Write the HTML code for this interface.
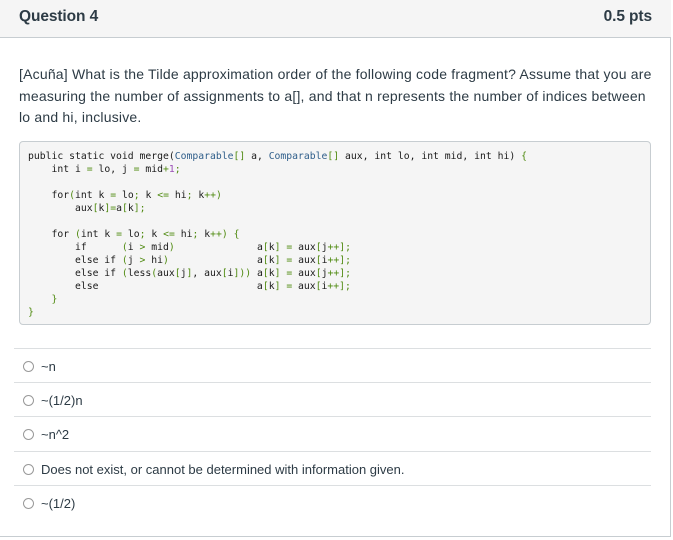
<!DOCTYPE html>
<html><head><meta charset="utf-8"><style>
body{margin:0;width:673px;height:540px;background:#fff;font-family:"Liberation Sans",sans-serif;color:#2d3b45;overflow:hidden;position:relative}
.card{position:absolute;left:-2px;top:-2px;width:671px;height:538px;border:1px solid #c7cdd1;border-top:none}
.hdr{position:absolute;left:0;top:0;width:671px;height:37px;background:#f5f5f5;border-bottom:1px solid #c7cdd1}
.hdr b{position:absolute;top:8px;font-size:15.5px;color:#2d3b45;letter-spacing:-0.1px}
.q{position:absolute;left:19px;top:64px;font-size:14px;line-height:21.5px;white-space:nowrap;letter-spacing:0.2px}
pre{position:absolute;left:19px;top:141px;width:632px;height:184px;box-sizing:border-box;margin:0;padding:8px 0 0 8px;background:#f5f5f5;border:1px solid #c7cdd1;border-radius:4px;font-family:"DejaVu Sans Mono",monospace;font-size:9.75px;line-height:13px;color:#1a1a1a}
.c{color:#2f5e8a}.g{color:#4f8a10}.n{color:#9a4fb5}
.ans{position:absolute;left:14px;width:637px;border-top:1px solid #dcdfe1;height:34px}
.ans span{position:absolute;left:27px;top:10px;font-size:13px;white-space:nowrap}
.ans i{position:absolute;left:9px;top:12px;width:9px;height:9px;border:1px solid #999;border-radius:50%}
</style></head><body>
<div class="card"></div>
<div class="hdr"><b style="left:19px">Question 4</b><b style="right:19px">0.5 pts</b></div>
<div class="q">[Acuña] What is the Tilde approximation order of the following code fragment? Assume that you are<br>measuring the number of assignments to a[], and that n represents the number of indices between<br>lo and hi, inclusive.</div>
<pre>public static void merge(<span class="c">Comparable</span><span class="g">[]</span> a, <span class="c">Comparable</span><span class="g">[]</span> aux, int lo, int mid, int hi) <span class="g">{</span>
    int i <span class="g">=</span> lo, j <span class="g">=</span> mid<span class="g">+</span><span class="n">1</span><span class="g">;</span>

    for<span class="g">(</span>int k <span class="g">=</span> lo<span class="g">;</span> k <span class="g">&lt;=</span> hi<span class="g">;</span> k<span class="g">++)</span>
        aux<span class="g">[</span>k<span class="g">]=</span>a<span class="g">[</span>k<span class="g">];</span>

    for <span class="g">(</span>int k <span class="g">=</span> lo<span class="g">;</span> k <span class="g">&lt;=</span> hi<span class="g">;</span> k<span class="g">++)</span> <span class="g">{</span>
        if      <span class="g">(</span>i <span class="g">&gt;</span> mid<span class="g">)</span>              a<span class="g">[</span>k<span class="g">]</span> <span class="g">=</span> aux<span class="g">[</span>j<span class="g">++];</span>
        else if <span class="g">(</span>j <span class="g">&gt;</span> hi<span class="g">)</span>               a<span class="g">[</span>k<span class="g">]</span> <span class="g">=</span> aux<span class="g">[</span>i<span class="g">++];</span>
        else if <span class="g">(</span>less<span class="g">(</span>aux<span class="g">[</span>j<span class="g">]</span>, aux<span class="g">[</span>i<span class="g">]))</span> a<span class="g">[</span>k<span class="g">]</span> <span class="g">=</span> aux<span class="g">[</span>j<span class="g">++];</span>
        else                           a<span class="g">[</span>k<span class="g">]</span> <span class="g">=</span> aux<span class="g">[</span>i<span class="g">++];</span>
    <span class="g">}</span>
<span class="g">}</span></pre>
<div class="ans" style="top:348px"><i></i><span>~n</span></div>
<div class="ans" style="top:382px"><i></i><span>~(1/2)n</span></div>
<div class="ans" style="top:416px"><i></i><span>~n^2</span></div>
<div class="ans" style="top:451px"><i></i><span>Does not exist, or cannot be determined with information given.</span></div>
<div class="ans" style="top:485px"><i></i><span>~(1/2)</span></div>
</body></html>
